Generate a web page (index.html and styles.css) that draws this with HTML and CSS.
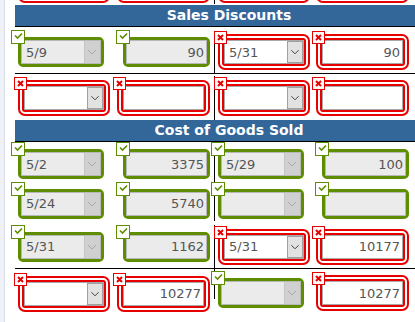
FILE: index.html
```html
<!DOCTYPE html>
<html>
<head>
<meta charset="utf-8">
<link rel="stylesheet" href="styles.css">
</head>
<body>
<div class="sheet">
  <div class="row row-cut">
    <div class="cell">
      <span class="fld er"><span class="mk"><svg viewBox="0 0 11 11"><path d="M3 3 8 8M8 3 3 8"/></svg></span><span class="ctl sel"><span class="dd"><svg viewBox="0 0 14 22"><path d="M3 9 7 13 11 9"/></svg></span></span></span>
      <span class="fld er"><span class="mk"><svg viewBox="0 0 11 11"><path d="M3 3 8 8M8 3 3 8"/></svg></span><span class="ctl txt"></span></span>
    </div>
    <div class="cell cell-r">
      <span class="fld er"><span class="mk"><svg viewBox="0 0 11 11"><path d="M3 3 8 8M8 3 3 8"/></svg></span><span class="ctl sel"><span class="dd"><svg viewBox="0 0 14 22"><path d="M3 9 7 13 11 9"/></svg></span></span></span>
      <span class="fld er"><span class="mk"><svg viewBox="0 0 11 11"><path d="M3 3 8 8M8 3 3 8"/></svg></span><span class="ctl txt"></span></span>
    </div>
  </div>

  <div class="head">Sales Discounts</div>

  <div class="row row-a">
    <div class="cell">
      <span class="fld ok"><span class="mk"><svg viewBox="0 0 12 12"><path d="M3 4.5 5.5 7 10 2.5"/></svg></span><span class="ctl sel">5/9<span class="dd"><svg viewBox="0 0 14 22"><path d="M3 9 7 13 11 9"/></svg></span></span></span>
      <span class="fld ok"><span class="mk"><svg viewBox="0 0 12 12"><path d="M3 4.5 5.5 7 10 2.5"/></svg></span><span class="ctl txt">90</span></span>
    </div>
    <div class="cell cell-r">
      <span class="fld er"><span class="mk"><svg viewBox="0 0 11 11"><path d="M3 3 8 8M8 3 3 8"/></svg></span><span class="ctl sel">5/31<span class="dd"><svg viewBox="0 0 14 22"><path d="M3 9 7 13 11 9"/></svg></span></span></span>
      <span class="fld er"><span class="mk"><svg viewBox="0 0 11 11"><path d="M3 3 8 8M8 3 3 8"/></svg></span><span class="ctl txt">90</span></span>
    </div>
  </div>

  <div class="row row-b sep">
    <div class="cell">
      <span class="fld er"><span class="mk"><svg viewBox="0 0 11 11"><path d="M3 3 8 8M8 3 3 8"/></svg></span><span class="ctl sel"><span class="dd"><svg viewBox="0 0 14 22"><path d="M3 9 7 13 11 9"/></svg></span></span></span>
      <span class="fld er"><span class="mk"><svg viewBox="0 0 11 11"><path d="M3 3 8 8M8 3 3 8"/></svg></span><span class="ctl txt"></span></span>
    </div>
    <div class="cell cell-r">
      <span class="fld er"><span class="mk"><svg viewBox="0 0 11 11"><path d="M3 3 8 8M8 3 3 8"/></svg></span><span class="ctl sel"><span class="dd"><svg viewBox="0 0 14 22"><path d="M3 9 7 13 11 9"/></svg></span></span></span>
      <span class="fld er"><span class="mk"><svg viewBox="0 0 11 11"><path d="M3 3 8 8M8 3 3 8"/></svg></span><span class="ctl txt"></span></span>
    </div>
  </div>

  <div class="head">Cost of Goods Sold</div>

  <div class="row row-c">
    <div class="cell">
      <span class="fld ok"><span class="mk"><svg viewBox="0 0 12 12"><path d="M3 4.5 5.5 7 10 2.5"/></svg></span><span class="ctl sel">5/2<span class="dd"><svg viewBox="0 0 14 22"><path d="M3 9 7 13 11 9"/></svg></span></span></span>
      <span class="fld ok"><span class="mk"><svg viewBox="0 0 12 12"><path d="M3 4.5 5.5 7 10 2.5"/></svg></span><span class="ctl txt">3375</span></span>
    </div>
    <div class="cell cell-r">
      <span class="fld ok"><span class="mk"><svg viewBox="0 0 12 12"><path d="M3 4.5 5.5 7 10 2.5"/></svg></span><span class="ctl sel">5/29<span class="dd"><svg viewBox="0 0 14 22"><path d="M3 9 7 13 11 9"/></svg></span></span></span>
      <span class="fld ok"><span class="mk"><svg viewBox="0 0 12 12"><path d="M3 4.5 5.5 7 10 2.5"/></svg></span><span class="ctl txt">100</span></span>
    </div>
  </div>

  <div class="row row-d">
    <div class="cell">
      <span class="fld ok"><span class="mk"><svg viewBox="0 0 12 12"><path d="M3 4.5 5.5 7 10 2.5"/></svg></span><span class="ctl sel">5/24<span class="dd"><svg viewBox="0 0 14 22"><path d="M3 9 7 13 11 9"/></svg></span></span></span>
      <span class="fld ok"><span class="mk"><svg viewBox="0 0 12 12"><path d="M3 4.5 5.5 7 10 2.5"/></svg></span><span class="ctl txt">5740</span></span>
    </div>
    <div class="cell cell-r">
      <span class="fld ok"><span class="mk"><svg viewBox="0 0 12 12"><path d="M3 4.5 5.5 7 10 2.5"/></svg></span><span class="ctl sel"><span class="dd"><svg viewBox="0 0 14 22"><path d="M3 9 7 13 11 9"/></svg></span></span></span>
      <span class="fld ok"><span class="mk"><svg viewBox="0 0 12 12"><path d="M3 4.5 5.5 7 10 2.5"/></svg></span><span class="ctl txt"></span></span>
    </div>
  </div>

  <div class="row row-e">
    <div class="cell">
      <span class="fld ok"><span class="mk"><svg viewBox="0 0 12 12"><path d="M3 4.5 5.5 7 10 2.5"/></svg></span><span class="ctl sel">5/31<span class="dd"><svg viewBox="0 0 14 22"><path d="M3 9 7 13 11 9"/></svg></span></span></span>
      <span class="fld ok"><span class="mk"><svg viewBox="0 0 12 12"><path d="M3 4.5 5.5 7 10 2.5"/></svg></span><span class="ctl txt">1162</span></span>
    </div>
    <div class="cell cell-r">
      <span class="fld er"><span class="mk"><svg viewBox="0 0 11 11"><path d="M3 3 8 8M8 3 3 8"/></svg></span><span class="ctl sel">5/31<span class="dd"><svg viewBox="0 0 14 22"><path d="M3 9 7 13 11 9"/></svg></span></span></span>
      <span class="fld er"><span class="mk"><svg viewBox="0 0 11 11"><path d="M3 3 8 8M8 3 3 8"/></svg></span><span class="ctl txt">10177</span></span>
    </div>
  </div>

  <div class="row row-f sep">
    <div class="cell">
      <span class="fld er"><span class="mk"><svg viewBox="0 0 11 11"><path d="M3 3 8 8M8 3 3 8"/></svg></span><span class="ctl sel"><span class="dd"><svg viewBox="0 0 14 22"><path d="M3 9 7 13 11 9"/></svg></span></span></span>
      <span class="fld er"><span class="mk"><svg viewBox="0 0 11 11"><path d="M3 3 8 8M8 3 3 8"/></svg></span><span class="ctl txt">10277</span></span>
    </div>
    <div class="cell cell-r cell-short">
      <span class="fld ok"><span class="mk"><svg viewBox="0 0 12 12"><path d="M3 4.5 5.5 7 10 2.5"/></svg></span><span class="ctl sel"><span class="dd"><svg viewBox="0 0 14 22"><path d="M3 9 7 13 11 9"/></svg></span></span></span>
      <span class="fld er"><span class="mk"><svg viewBox="0 0 11 11"><path d="M3 3 8 8M8 3 3 8"/></svg></span><span class="ctl txt">10277</span></span>
    </div>
  </div>
</div>
</body>
</html>
```

FILE: styles.css
```css
html, body {
  margin: 0;
  padding: 0;
  overflow: hidden;
}
body {
  width: 415px;
  height: 322px;
  background: linear-gradient(to right, #eef2f8 0, #eef2f8 4px, #d8dee6 4px, #d8dee6 5px, #ffffff 5px);
  font-family: "DejaVu Sans", Verdana, sans-serif;
}
.sheet {
  margin-left: 15px;
  width: 428px;
}
.head {
  height: 22px;
  box-sizing: border-box;
  line-height: 21px;
  background: #336699;
  color: #ffffff;
  font-weight: bold;
  font-size: 14px;
  text-align: center;
  border-bottom: 1px solid #000000;
}
.row {
  display: flex;
  box-sizing: border-box;
}
.sep {
  border-top: 1px solid #000000;
}
.cell {
  width: 199px;
  box-sizing: border-box;
  display: flex;
  justify-content: space-between;
  align-items: center;
  padding: 0 4px 0 3px;
}
.cell-r {
  border-left: 1px solid #000000;
}
.cell-short {
  align-self: flex-start;
  height: 30px;
  padding-top: 18px;
}
.row-cut { height: 40px; margin-top: -35px; padding-bottom: 1px; }
.row-a { height: 46px; padding-top: 4px; }
.row-b { height: 47px; padding-top: 2px; }
.row-c { height: 40px; padding-top: 4px; }
.row-d { height: 39px; padding-top: 4px; }
.row-e { height: 47px; padding-top: 4px; }
.row-f { height: 50px; }

.fld {
  position: relative;
  display: block;
}
.ok {
  border: 3px solid #5e8e00;
  border-radius: 5px;
}
.er {
  border: 6px double #e60000;
  border-radius: 7px;
}
.mk {
  position: absolute;
  left: -10px;
  top: -10px;
  width: 14px;
  height: 14px;
  box-sizing: border-box;
  background: #ffffff;
  border: 1px solid #5e8e00;
  z-index: 1;
}
.mk svg {
  display: block;
  width: 12px;
  height: 12px;
  fill: none;
  stroke: #5e8e00;
  stroke-width: 1.6;
}
.er .mk {
  top: -9px;
  width: 13px;
  height: 13px;
  border-color: #e60000;
}
.er .mk svg {
  width: 11px;
  height: 11px;
  stroke: #e60000;
  stroke-width: 2;
}
.ctl {
  display: flex;
  align-items: center;
  box-sizing: border-box;
  height: 24px;
  border: 1px solid #b8b8b8;
  background: #ebebeb;
  color: #555555;
  font-size: 13px;
  padding-left: 4px;
  white-space: nowrap;
}
.er .ctl {
  background: #ffffff;
  border-color: #a9a9a9;
}
.sel {
  width: 80px;
}
.txt {
  width: 81px;
  justify-content: flex-end;
  padding-right: 2px;
}
.dd {
  margin-left: auto;
  width: 16px;
  height: 22px;
  box-sizing: border-box;
  background: #d0d0d0;
  border-left: 1px solid #c4c4c4;
}
.dd svg {
  display: block;
  width: 14px;
  height: 22px;
  fill: none;
  stroke: #a8a8a8;
  stroke-width: 1;
}
.er .dd {
  background: #e2e2e2;
  border: 1px solid #a0a0a0;
}
.er .dd svg {
  width: 14px;
  height: 20px;
  stroke: #333333;
}
```
